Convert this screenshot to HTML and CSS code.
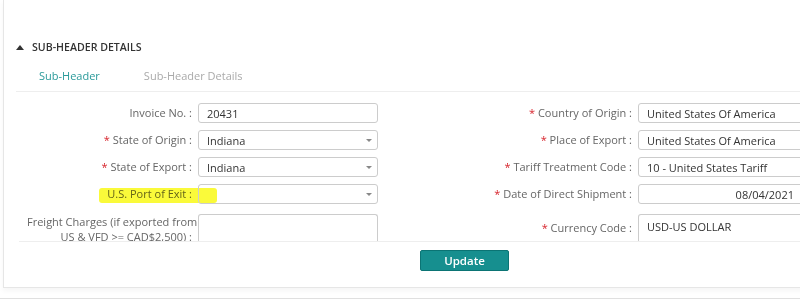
FILE: index.html
```html
<!DOCTYPE html>
<html lang="en">
<head>
    <meta charset="UTF-8">
    <title>Sub-Header Details</title>
    <link rel="stylesheet" href="styles.css">
</head>
<body>
    <div class="panel">
        <div class="section-head">
            <span class="caret-up"></span>
            <span class="section-title">SUB-HEADER DETAILS</span>
        </div>
        <div class="tabs">
            <span class="tab active">Sub-Header</span>
            <span class="tab">Sub-Header Details</span>
        </div>
        <div class="form-scroll">
            <div class="form-grid">
                <label class="lbl">Invoice No. :</label>
                <div class="field"><span class="value">20431</span></div>
                <label class="lbl"><span class="req">*</span> Country of Origin :</label>
                <div class="field"><span class="value">United States Of America</span></div>

                <label class="lbl"><span class="req">*</span> State of Origin :</label>
                <div class="field select"><span class="value">Indiana</span></div>
                <label class="lbl"><span class="req">*</span> Place of Export :</label>
                <div class="field"><span class="value">United States Of America</span></div>

                <label class="lbl"><span class="req">*</span> State of Export :</label>
                <div class="field select"><span class="value">Indiana</span></div>
                <label class="lbl"><span class="req">*</span> Tariff Treatment Code :</label>
                <div class="field"><span class="value">10 - United States Tariff</span></div>

                <label class="lbl marked">U.S. Port of Exit :<span class="highlight"></span></label>
                <div class="field select"><span class="value"></span></div>
                <label class="lbl"><span class="req">*</span> Date of Direct Shipment :</label>
                <div class="field date"><span class="value">08/04/2021</span></div>

                <label class="lbl nowrap two-line">Freight Charges (if exported from<br>US &amp; VFD &gt;= CAD$2,500) :</label>
                <div class="field tall"></div>
                <label class="lbl"><span class="req">*</span> Currency Code :</label>
                <div class="field tall"><span class="value">USD-US DOLLAR</span></div>
            </div>
        </div>
        <div class="footer">
            <button class="btn-update" type="button">Update</button>
        </div>
    </div>
    <div class="below"></div>
</body>
</html>
```

FILE: styles.css
```css
body {
    margin: 0;
    font-family: 'Open Sans', sans-serif;
    color: #333;
    background-color: #fff;
    overflow: hidden;
}
.panel {
    margin-left: 3px;
    height: 288px;
    border-left: 1px solid #e6e6e6;
    border-bottom: 1px solid #e6e6e6;
    box-shadow: 0 3px 5px rgba(0, 0, 0, 0.04);
    box-sizing: border-box;
    padding-top: 38px;
    width: 840px;
}
.section-head {
    display: flex;
    align-items: center;
    height: 18px;
    padding-left: 12px;
}
.caret-up {
    width: 0;
    height: 0;
    border-left: 4px solid transparent;
    border-right: 4px solid transparent;
    border-bottom: 5px solid #333;
    margin-right: 8px;
}
.section-title {
    font-size: 10.6px;
    font-weight: 600;
    color: #333;
}
.tabs {
    margin-left: 12px;
    margin-top: 10px;
    height: 25px;
    border-bottom: 1px solid #eee;
    display: flex;
    gap: 44px;
    padding-left: 23px;
}
.tab {
    font-size: 11px;
    line-height: 20px;
    color: #aaa;
}
.tab.active {
    color: #2a9a9a;
}
.form-scroll {
    height: 149px;
    overflow: hidden;
}
.form-grid {
    display: grid;
    grid-template-columns: 165px 180px 248px 170px;
    grid-template-rows: 20px 20px 20px 20px auto;
    column-gap: 6px;
    row-gap: 7px;
    align-items: center;
    padding-top: 11px;
    padding-left: 23px;
}
.lbl {
    font-size: 11px;
    line-height: 14px;
    color: #666;
    text-align: right;
}
.nowrap {
    white-space: nowrap;
}
.two-line {
    line-height: 15px;
    padding-top: 3px;
}
.req {
    color: #d7242c;
}
.marked {
    position: relative;
}
.highlight {
    position: absolute;
    left: 72px;
    top: 1px;
    width: 118px;
    height: 15px;
    background-color: #fafa3a;
    border-radius: 3px;
    mix-blend-mode: multiply;
}
.field {
    height: 20px;
    border: 1px solid #ccc;
    border-radius: 3px;
    box-sizing: border-box;
    display: flex;
    align-items: center;
    padding: 0 8px;
    font-size: 11px;
    color: #333;
    position: relative;
    white-space: nowrap;
}
.field.tall {
    height: 28px;
    margin-top: 3px;
    align-self: start;
    border-bottom: none;
    border-radius: 3px 3px 0 0;
    padding-bottom: 4px;
}
.field.date {
    justify-content: flex-end;
    padding-right: 13px;
}
.field.select::after {
    content: "";
    position: absolute;
    right: 5px;
    top: 8px;
    border-left: 3px solid transparent;
    border-right: 3px solid transparent;
    border-top: 3px solid #888;
}
.footer {
    margin-left: 15px;
    border-top: 1px solid #eee;
    padding-top: 8px;
    padding-left: 401px;
}
.btn-update {
    display: block;
    width: 89px;
    height: 21px;
    background-color: #168f8f;
    border: 1px solid #0b7474;
    border-radius: 2px;
    color: #fff;
    font-family: 'Open Sans', sans-serif;
    font-size: 11.5px;
    font-weight: 600;
    padding: 0;
}
.below {
    margin-top: 10px;
    border-top: 1px solid #e0e0e0;
}
```
